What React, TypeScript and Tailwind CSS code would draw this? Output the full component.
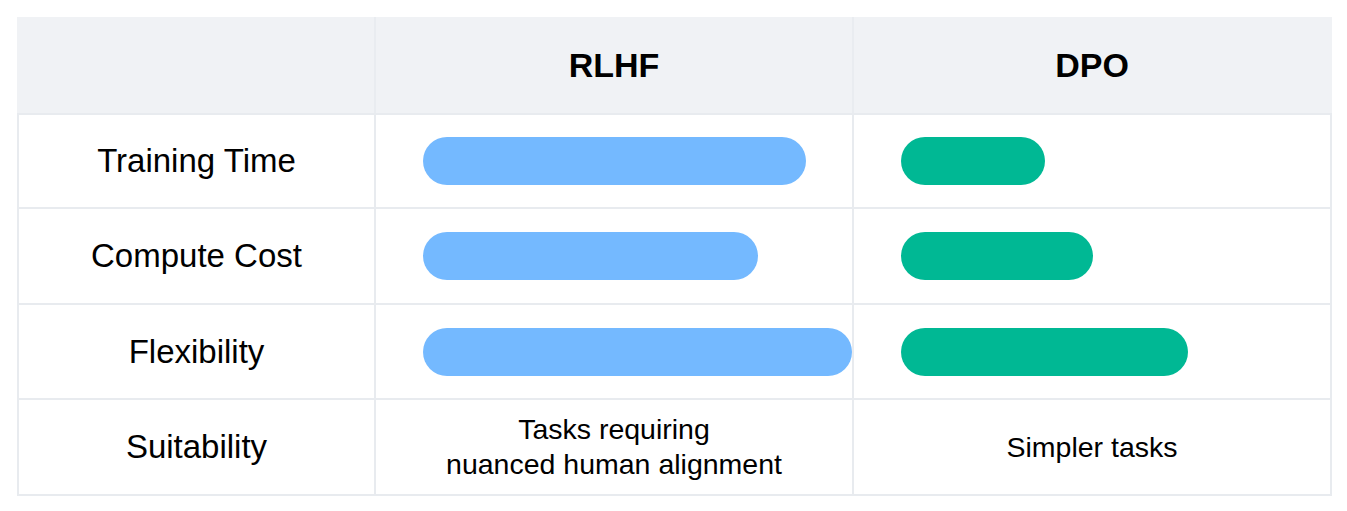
const rows = [
  { label: 'Training Time', rlhf: 383, dpo: 144, h: 'h-[96px] border-t-2' },
  { label: 'Compute Cost', rlhf: 335, dpo: 192, h: 'h-[96px]' },
  { label: 'Flexibility', rlhf: 430, dpo: 287, h: 'h-[95px]' },
]

function Bar({ width, color }: { width: number; color: string }) {
  return <div className={`h-12 rounded-full ${color}`} style={{ width }} />
}

export default function App() {
  return (
    <div
      className="min-h-screen bg-white pt-[17px] pl-[17px] text-black"
      style={{ fontFamily: '"Liberation Sans", Arial, sans-serif' }}
    >
      <div className="w-[1315px]">
        <div className="grid h-[96px] grid-cols-[357px_478px_476px] border-x-2 border-[#f0f2f5] bg-[#f0f2f5] text-[34px] font-bold">
          <div className="border-r-2 border-[#e9ecf0]" />
          <div className="flex items-center justify-center border-r-2 border-[#e9ecf0]">RLHF</div>
          <div className="flex items-center justify-center">DPO</div>
        </div>

        {rows.map((r) => (
          <div
            key={r.label}
            className={`grid grid-cols-[357px_478px_476px] border-x-2 border-b-2 border-[#e8ebef] ${r.h}`}
          >
            <div className="flex items-center justify-center border-r-2 border-[#e8ebef] text-[33px]">{r.label}</div>
            <div className="flex items-center border-r-2 border-[#e8ebef] pl-[47px]">
              <Bar width={r.rlhf} color="bg-[#74b9ff]" />
            </div>
            <div className="flex items-center pl-[47px]">
              <Bar width={r.dpo} color="bg-[#00b894]" />
            </div>
          </div>
        ))}

        <div className="grid h-[96px] grid-cols-[357px_478px_476px] border-x-2 border-b-2 border-[#e8ebef]">
          <div className="flex items-center justify-center border-r-2 border-[#e8ebef] text-[33px]">Suitability</div>
          <div className="flex items-center justify-center border-r-2 border-[#e8ebef] text-center text-[28.5px] leading-[35px]">
            Tasks requiring
            <br />
            nuanced human alignment
          </div>
          <div className="flex items-center justify-center text-[28.5px]">Simpler tasks</div>
        </div>
      </div>
    </div>
  )
}
